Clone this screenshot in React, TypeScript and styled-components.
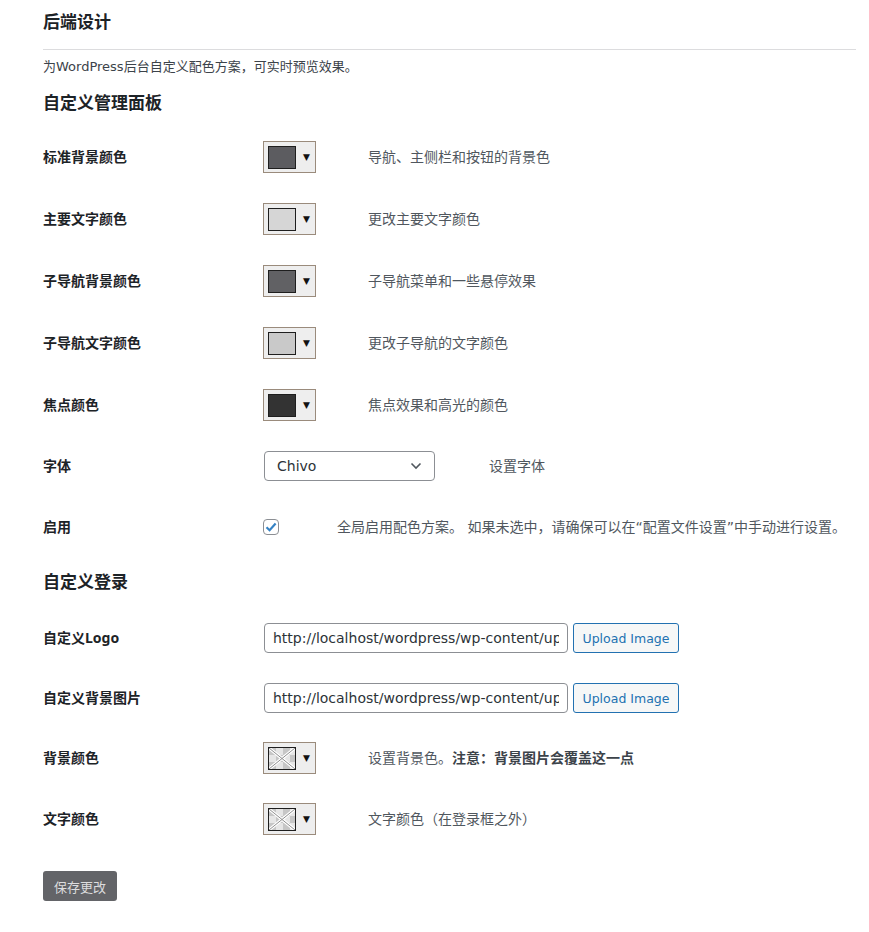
import React from "react";
import styled, { createGlobalStyle } from "styled-components";

const Global = createGlobalStyle`
  html, body { margin: 0; padding: 0; background: #fff; }
  body { font-family: "DejaVu Sans", "Noto Sans CJK SC", sans-serif; color: #3c434a; }
  * { box-sizing: border-box; }
`;

const Wrap = styled.div`
  display: flex;
  flex-direction: column;
  padding: 11px 13px 40px 43px;
  width: 869px;
`;

const Title = styled.h1`
  margin: 0;
  font-size: 17px;
  line-height: 22px;
  font-weight: 700;
  color: #1d2327;
  font-family: "Noto Sans", "Noto Sans CJK SC", sans-serif;
`;

const Rule = styled.hr`
  margin: 16px 0 0 0;
  border: 0;
  border-top: 1px solid #dcdcde;
  height: 0;
`;

const Intro = styled.p`
  margin: 7px 0 0 0;
  font-size: 13px;
  line-height: 20px;
  color: #3c434a;
`;

const Section = styled.h2<{ $top: number }>`
  margin: ${(p) => p.$top}px 0 0 0;
  font-size: 17px;
  line-height: 22px;
  font-weight: 700;
  color: #1d2327;
  font-family: "Noto Sans", "Noto Sans CJK SC", sans-serif;
`;

const Table = styled.div<{ $top: number }>`
  display: flex;
  flex-direction: column;
  margin-top: ${(p) => p.$top}px;
`;

const Row = styled.div<{ $h: number }>`
  display: grid;
  grid-template-columns: 220px 1fr;
  align-items: center;
  height: ${(p) => p.$h}px;
`;

const Label = styled.div`
  font-family: "Noto Sans", "Noto Sans CJK SC", sans-serif;
  font-size: 14px;
  font-weight: 700;
  color: #1d2327;
  line-height: 20px;
`;

const Field = styled.div`
  display: flex;
  align-items: center;
`;

const Desc = styled.span<{ $gap: number }>`
  margin-left: ${(p) => p.$gap}px;
  font-size: 14px;
  line-height: 20px;
  color: #50575e;
  white-space: nowrap;
`;

const Strong = styled.strong`
  font-weight: 700;
  color: #3c434a;
`;

const Picker = styled.div`
  width: 53px;
  height: 32px;
  border: 1px solid #9a8b7c;
  background: #eeeeee;
  display: flex;
  align-items: center;
  padding-left: 4px;
`;

const Swatch = styled.div<{ $c: string }>`
  width: 28px;
  height: 23px;
  border: 1px solid #1e1e1e;
  background: ${(p) => p.$c};
  display: flex;
  overflow: hidden;
`;

const Arrow = styled.span`
  margin-left: 7px;
  font-size: 9px;
  line-height: 1;
  color: #111;
`;

const SelectBox = styled.div`
  margin-left: 1px;
  width: 171px;
  height: 30px;
  border: 1px solid #8c8f94;
  border-radius: 4px;
  display: flex;
  align-items: center;
  justify-content: space-between;
  padding: 0 12px 0 12px;
  font-size: 14px;
  color: #2c3338;
  background: #fff;
`;

const Check = styled.div`
  width: 16px;
  height: 16px;
  border: 1px solid #8c8f94;
  border-radius: 4px;
  display: flex;
  align-items: center;
  justify-content: center;
  background: #fff;
`;

const TextInput = styled.input`
  margin-left: 1px;
  width: 304px;
  height: 30px;
  border: 1px solid #8c8f94;
  border-radius: 4px;
  padding: 0 8px;
  font-family: "DejaVu Sans", sans-serif;
  font-size: 14px;
  color: #2c3338;
  background: #fff;
  outline: none;
`;

const UploadButton = styled.button`
  margin-left: 5px;
  width: 106px;
  height: 30px;
  border: 1px solid #2271b1;
  border-radius: 3px;
  background: #f6f7f7;
  color: #2271b1;
  font-family: "DejaVu Sans", sans-serif;
  font-size: 12.5px;
  padding: 0;
`;

const Save = styled.button`
  margin-top: 21px;
  align-self: flex-start;
  width: 74px;
  height: 30px;
  border: 0;
  border-radius: 3px;
  background: #636468;
  color: #dcdcde;
  font-family: "Noto Sans CJK SC", sans-serif;
  font-size: 13px;
  padding: 0;
`;

const Transparent = () => (
  <svg width="26" height="21" viewBox="0 0 26 21">
    <rect width="26" height="21" fill="#e6e6e6" />
    {[0, 1, 2, 3].map((i) =>
      [0, 1, 2].map((j) =>
        (i + j) % 2 === 0 ? (
          <rect key={`${i}-${j}`} x={i * 7} y={j * 7} width="7" height="7" fill="#c6c6c6" />
        ) : null
      )
    )}
    <line x1="0" y1="0" x2="26" y2="21" stroke="#fff" strokeWidth="3" />
    <line x1="26" y1="0" x2="0" y2="21" stroke="#fff" strokeWidth="3" />
    <line x1="0" y1="0" x2="26" y2="21" stroke="#8f8f8f" strokeWidth="1" />
    <line x1="26" y1="0" x2="0" y2="21" stroke="#8f8f8f" strokeWidth="1" />
  </svg>
);

const ColorPicker = ({ color }: { color?: string }) => (
  <Picker>
    <Swatch $c={color || "transparent"}>{color ? null : <Transparent />}</Swatch>
    <Arrow>▼</Arrow>
  </Picker>
);

const colorRows = [
  { label: "标准背景颜色", color: "#5c5c60", desc: "导航、主侧栏和按钮的背景色" },
  { label: "主要文字颜色", color: "#d6d6d6", desc: "更改主要文字颜色" },
  { label: "子导航背景颜色", color: "#616164", desc: "子导航菜单和一些悬停效果" },
  { label: "子导航文字颜色", color: "#c9c9c9", desc: "更改子导航的文字颜色" },
  { label: "焦点颜色", color: "#333333", desc: "焦点效果和高光的颜色" },
];

export default function App() {
  return (
    <>
      <Global />
      <Wrap>
        <Title>后端设计</Title>
        <Rule />
        <Intro>为WordPress后台自定义配色方案，可实时预览效果。</Intro>
        <Section $top={15}>自定义管理面板</Section>
        <Table $top={12}>
          {colorRows.map((r) => (
            <Row $h={62} key={r.label}>
              <Label>{r.label}</Label>
              <Field>
                <ColorPicker color={r.color} />
                <Desc $gap={52}>{r.desc}</Desc>
              </Field>
            </Row>
          ))}
          <Row $h={60}>
            <Label>字体</Label>
            <Field>
              <SelectBox>
                <span>Chivo</span>
                <svg width="12" height="8" viewBox="0 0 12 8">
                  <path d="M1.5 1.5 L6 6 L10.5 1.5" fill="none" stroke="#50575e" strokeWidth="1.6" />
                </svg>
              </SelectBox>
              <Desc $gap={54}>设置字体</Desc>
            </Field>
          </Row>
          <Row $h={62}>
            <Label>启用</Label>
            <Field>
              <Check>
                <svg width="14" height="14" viewBox="0 0 14 14">
                  <path d="M2.5 7.2 L5.6 10.2 L11.6 3.6" fill="none" stroke="#3582c4" strokeWidth="2.2" />
                </svg>
              </Check>
              <Desc $gap={58}>全局启用配色方案。 如果未选中，请确保可以在“配置文件设置”中手动进行设置。</Desc>
            </Field>
          </Row>
        </Table>
        <Section $top={13}>自定义登录</Section>
        <Table $top={15}>
          <Row $h={60}>
            <Label>自定义Logo</Label>
            <Field>
              <TextInput readOnly value="http://localhost/wordpress/wp-content/uploads/logo.png" />
              <UploadButton>Upload Image</UploadButton>
            </Field>
          </Row>
          <Row $h={60}>
            <Label>自定义背景图片</Label>
            <Field>
              <TextInput readOnly value="http://localhost/wordpress/wp-content/uploads/bg.jpg" />
              <UploadButton>Upload Image</UploadButton>
            </Field>
          </Row>
          <Row $h={60}>
            <Label>背景颜色</Label>
            <Field>
              <ColorPicker />
              <Desc $gap={52}>
                设置背景色。<Strong>注意：背景图片会覆盖这一点</Strong>
              </Desc>
            </Field>
          </Row>
          <Row $h={62}>
            <Label>文字颜色</Label>
            <Field>
              <ColorPicker />
              <Desc $gap={52}>文字颜色（在登录框之外）</Desc>
            </Field>
          </Row>
        </Table>
        <Save>保存更改</Save>
      </Wrap>
    </>
  );
}
